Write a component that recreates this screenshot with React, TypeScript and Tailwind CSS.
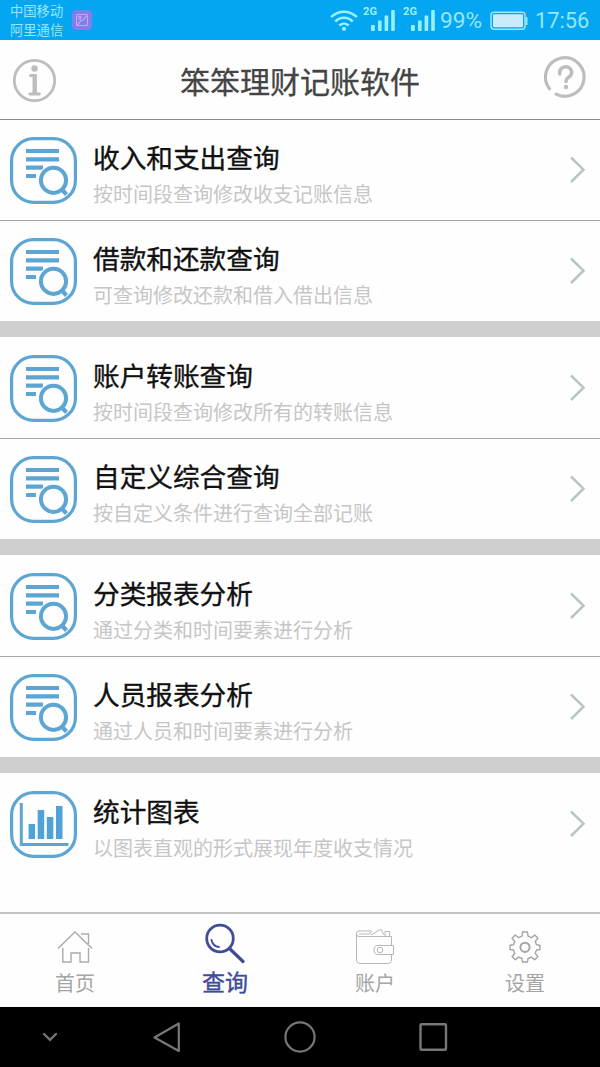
import React from "react";

function SearchDocIcon() {
  return (
    <svg width="67" height="67" viewBox="0 0 67 67" fill="none" stroke="#5da6d3">
      <rect x="1.6" y="1.6" width="63.8" height="63.8" rx="22" strokeWidth="3.2" />
      <path d="M16 14H49M16 22.3H49M16 30.7H33M16 39H26" strokeWidth="4.2" />
      <circle cx="43.5" cy="43.3" r="15.5" fill="#fefefe" stroke="none" />
      <circle cx="43.5" cy="43.3" r="12.6" strokeWidth="4" />
      <path d="M51 51.5L56.5 57.5" strokeWidth="4.2" />
    </svg>
  );
}

function ChartIcon() {
  return (
    <svg width="67" height="67" viewBox="0 0 67 67" fill="none" stroke="#5da6d3">
      <rect x="1.6" y="1.6" width="63.8" height="63.8" rx="22" strokeWidth="3.2" />
      <path d="M11.3 12V53.5H58.5" strokeWidth="3" />
      <g fill="#4fa3d8" stroke="none">
        <rect x="18.6" y="33" width="6.5" height="15" />
        <rect x="27.7" y="19" width="6.5" height="29" />
        <rect x="36.8" y="26" width="6.5" height="22" />
        <rect x="46" y="15" width="6.5" height="33" />
      </g>
    </svg>
  );
}

function Signal() {
  return (
    <svg width="34" height="30" viewBox="0 0 34 30" fill="#97f1fd">
      <text x="0" y="9.5" fontSize="10.5" fontWeight="700" fontFamily="Roboto, sans-serif" textLength="14" lengthAdjust="spacingAndGlyphs">2G</text>
      <rect x="8" y="20" width="3.8" height="6" rx=".8" />
      <rect x="15" y="15.5" width="3.6" height="10.5" rx=".8" />
      <rect x="21.6" y="10.5" width="3.6" height="15.5" rx=".8" />
      <rect x="28.2" y="5" width="3.6" height="21" rx=".8" />
    </svg>
  );
}

function StatusBar() {
  return (
    <div className="flex h-10 shrink-0 items-center bg-[#05a6f1] pl-2.5 text-[#97e6fb]">
      <div className="w-[54px] whitespace-nowrap pt-px text-[13.3px] leading-[18.5px]">
        <div>中国移动</div>
        <div>阿里通信</div>
      </div>
      <svg className="ml-[8px]" width="20" height="20" viewBox="0 0 20 20" fill="none" stroke="#c9a6ff" strokeWidth="1.1">
        <rect width="20" height="20" rx="4.5" fill="#7f7fe8" stroke="none" />
        <rect x="4.5" y="4.5" width="11" height="11" rx="1" />
        <circle cx="7.8" cy="7.8" r="1.4" />
        <path d="M5 15C8 14 7 10.5 10 10.5S12 6 15 6" />
      </svg>
      <svg className="ml-[238px] mt-px" width="28" height="22" viewBox="0 0 28 22" fill="none" stroke="#97f1fd" strokeWidth="2.5">
        <path d="M1 7.2C8.5-.2 19.5-.2 27 7.2M5.2 11.6C10.5 6.5 17.5 6.5 22.8 11.6M9.3 15.6C12.1 13 15.9 13 18.7 15.6" />
        <circle cx="14" cy="18.8" r="2.1" fill="#97f1fd" stroke="none" />
      </svg>
      <div className="ml-[5px] flex gap-[6px]">
        <Signal />
        <Signal />
      </div>
      <span className="ml-[3px] mt-0.5 w-[44px] whitespace-nowrap font-[Roboto] text-[22.7px]">99%</span>
      <svg className="ml-[6px] mt-0.5" width="38" height="20" viewBox="0 0 38 20" fill="none" stroke="#97e9fd">
        <rect x="1" y="1.2" width="34" height="17" rx="3" strokeWidth="1.5" />
        <rect x="3" y="3.2" width="30" height="13" rx="1" fill="#c9ebfb" stroke="none" />
        <path d="M36.5 6V14" strokeWidth="2" />
      </svg>
      <span className="ml-[7px] mt-0.5 whitespace-nowrap font-[Roboto] text-[21.8px]">17:56</span>
    </div>
  );
}

function Header() {
  return (
    <header className="flex h-20 shrink-0 items-center justify-between border-b border-[#8c8c8c] pl-3 pr-3">
      <svg width="44" height="44" viewBox="0 0 44 44" fill="none" stroke="#bdbdbd">
        <circle cx="22.5" cy="22.5" r="20.2" strokeWidth="2.8" />
        <circle cx="22.5" cy="10.5" r="3.2" fill="#bdbdbd" stroke="none" />
        <path d="M18.5 17.5H23M17.8 36H27.5" strokeWidth="2.8" strokeLinecap="round" />
        <path d="M22.7 16.5V36" strokeWidth="4.4" />
      </svg>
      <h1 className="whitespace-nowrap pt-px text-[30px] leading-10 text-[#444] [-webkit-text-stroke:0.3px_#444]">笨笨理财记账软件</h1>
      <svg className="mb-[3px]" width="44" height="44" viewBox="0 0 44 44" fill="none" stroke="#bdbdbd" strokeLinecap="round">
        <path d="M5.5 32.8A19.3 19.3 0 1 1 12 38.2" strokeWidth="3.2" />
        <path d="M15.7 18V17A6 5.5 0 1 1 25.5 20.5C23 22 22 23 22 25.5" strokeWidth="3.5" />
        <circle cx="22" cy="31" r="2.2" fill="#bdbdbd" stroke="none" />
      </svg>
    </header>
  );
}

type Item = { title: string; desc: string; chart?: boolean };

const groups: Item[][] = [
  [
    { title: "收入和支出查询", desc: "按时间段查询修改收支记账信息" },
    { title: "借款和还款查询", desc: "可查询修改还款和借入借出信息" },
  ],
  [
    { title: "账户转账查询", desc: "按时间段查询修改所有的转账信息" },
    { title: "自定义综合查询", desc: "按自定义条件进行查询全部记账" },
  ],
  [
    { title: "分类报表分析", desc: "通过分类和时间要素进行分析" },
    { title: "人员报表分析", desc: "通过人员和时间要素进行分析" },
  ],
  [{ title: "统计图表", desc: "以图表直观的形式展现年度收支情况", chart: true }],
];

function Row({ item }: { item: Item }) {
  return (
    <div className="flex h-[100px] items-center pl-2.5 pr-3.5">
      {item.chart ? <ChartIcon /> : <SearchDocIcon />}
      <div className="ml-4 flex-1 whitespace-nowrap pt-[10px]">
        <div className="text-[26.67px] leading-[38px] text-[#111] [-webkit-text-stroke:0.35px_#111]">{item.title}</div>
        <div className="text-[20px] leading-9 text-[#c6c6c6]">{item.desc}</div>
      </div>
      <svg width="18" height="28" viewBox="0 0 18 28" fill="none" stroke="#b9c5c2" strokeWidth="2.5">
        <path d="M3 1.5L15.5 13.7L3 26" />
      </svg>
    </div>
  );
}

function TabBar() {
  return (
    <nav className="grid h-[95px] shrink-0 grid-cols-4 border-t-2 border-[#c2c2c2] text-[20px] leading-7 text-[#a5a5a5]">
      <div className="flex flex-col items-center pt-4">
        <svg width="36" height="36" viewBox="0 0 36 36" fill="none" stroke="#aaa" strokeWidth="1.4">
          <path d="M1 18.5L18 2L35 18.5M24 4H31.5V14M5.8 18V32H14V23H23V32H31.5V18" />
        </svg>
        <span className="mt-[3px]">首页</span>
      </div>
      <div className="flex flex-col items-center pt-[9px] text-[23px] text-[#3f4c98]">
        <svg width="40" height="42" viewBox="0 0 40 42" fill="none" stroke="#3f4c98" strokeLinecap="round">
          <circle cx="15" cy="15.5" r="13.3" strokeWidth="2.8" />
          <path d="M24.5 25.5L38 38.5" strokeWidth="3.2" />
          <path d="M6.5 17C7.3 21 10 23.5 14 24" strokeWidth="1.8" />
        </svg>
        <span className="mt-[2px] [-webkit-text-stroke:0.4px_#3f4c98]">查询</span>
      </div>
      <div className="flex flex-col items-center pt-[14px]">
        <svg width="40" height="38" viewBox="0 0 40 38" fill="none" stroke="#b7b7b7" strokeWidth="1">
          <path d="M36.5 17.5V8.5H4Q1.5 8.5 1.5 6V32Q1.5 35.5 5 35.5H33Q36.5 35.5 36.5 32V26.5" />
          <path d="M1.5 6Q1.5 3 4 3H16.5L14.5 6H4M16 7L26 1.2L29 7M30 8V3.5H34.5V8" />
          <path d="M38.5 17.5H23Q19 17.5 19 22T23 26.5H38.5Z" />
          <circle cx="25" cy="22" r="2.8" />
        </svg>
        <span className="mt-[3px]">账户</span>
      </div>
      <div className="flex flex-col items-center pt-4">
        <svg width="34" height="34" viewBox="0 0 34 34" fill="none" stroke="#a5a5a5" strokeWidth="1.4" strokeLinejoin="round">
          <path d="M14.5 2H19.5L20 6.2L23.5 7.7L26.8 5L30 8.4L27.2 11.5L28.5 14.8L32 15.3V19.5L28.5 20L27.2 23.3L30 26.6L26.6 29.8L23.4 27.1L20 28.5L19.5 32H14.5L14 28.5L10.6 27.1L7.4 29.8L4 26.6L6.8 23.3L5.5 20L2 19.5V15.3L5.5 14.8L6.8 11.5L4 8.4L7.2 5L10.5 7.7L14 6.2Z" />
          <circle cx="17" cy="17.3" r="4.6" strokeWidth="2" />
        </svg>
        <span className="mt-[5px]">设置</span>
      </div>
    </nav>
  );
}

function SystemBar() {
  return (
    <div className="flex h-[60px] shrink-0 items-center bg-black pl-[42px]">
      <svg width="16" height="10" viewBox="0 0 16 10" fill="none" stroke="#777" strokeWidth="2.4" strokeLinecap="round">
        <path d="M2 2L8 7.8L14 2" />
      </svg>
      <svg className="ml-[94px]" width="30" height="32" viewBox="0 0 30 32" fill="none" stroke="#777" strokeWidth="2.2" strokeLinejoin="round">
        <path d="M2.5 16.5L26.8 2.5V30Z" />
      </svg>
      <svg className="ml-[102px]" width="32" height="32" viewBox="0 0 32 32" fill="none" stroke="#777" strokeWidth="2.2">
        <circle cx="16" cy="16" r="14.6" />
      </svg>
      <svg className="ml-[102px]" width="30" height="30" viewBox="0 0 30 30" fill="none" stroke="#777" strokeWidth="2.4">
        <rect x="2.5" y="2.3" width="25.5" height="25.5" rx="1" />
      </svg>
    </div>
  );
}

export default function App() {
  return (
    <div className="flex h-[1067px] w-[600px] flex-col overflow-hidden bg-[#fefefe] font-['Noto_Sans_CJK_SC',sans-serif]">
      <StatusBar />
      <Header />
      <main className="flex-1">
        {groups.map((g, i) => (
          <section key={i}>
            {i > 0 && <div className="mb-px h-4 bg-[#cfcfcf]" />}
            {g.map((item, j) => (
              <React.Fragment key={item.title}>
                {j > 0 && <div className="h-px bg-[#a8a8a8]" />}
                <Row item={item} />
              </React.Fragment>
            ))}
          </section>
        ))}
      </main>
      <TabBar />
      <SystemBar />
    </div>
  );
}
